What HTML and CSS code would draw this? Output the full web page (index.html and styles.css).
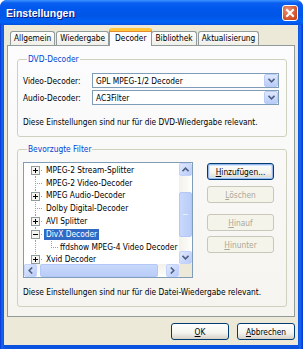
FILE: index.html
```html
<!DOCTYPE html>
<html lang="de">
<head>
    <meta charset="UTF-8">
    <meta name="viewport" content="width=device-width, initial-scale=1.0">
    <title>Einstellungen</title>
    <link rel="stylesheet" href="styles.css">
</head>
<body>
<div class="window">
    <div class="titlebar">
        <span class="title">Einstellungen</span>
        <span class="close-btn">
            <svg width="16" height="16" viewBox="0 0 16 16"><path d="M5 5 L11 11 M11 5 L5 11" stroke="#fff" stroke-width="2" stroke-linecap="square"/></svg>
        </span>
    </div>

    <div class="client">
        <div class="tabs">
            <div class="tab">Allgemein</div>
            <div class="tab">Wiedergabe</div>
            <div class="tab active">Decoder</div>
            <div class="tab">Bibliothek</div>
            <div class="tab">Aktualisierung</div>
        </div>

        <div class="panel">
            <fieldset class="group group-dvd">
                <legend>DVD-Decoder</legend>
                <div class="field">
                    <span class="field-label">Video-Decoder:</span>
                    <div class="combo">
                        <span class="combo-value">GPL MPEG-1/2 Decoder</span>
                        <span class="combo-btn"><svg width="7" height="5" viewBox="0 0 7 5"><path d="M0.5 0.8 L3.5 3.8 L6.5 0.8" fill="none" stroke="#4d6185" stroke-width="1.6"/></svg></span>
                    </div>
                </div>
                <div class="field">
                    <span class="field-label">Audio-Decoder:</span>
                    <div class="combo">
                        <span class="combo-value">AC3Filter</span>
                        <span class="combo-btn"><svg width="7" height="5" viewBox="0 0 7 5"><path d="M0.5 0.8 L3.5 3.8 L6.5 0.8" fill="none" stroke="#4d6185" stroke-width="1.6"/></svg></span>
                    </div>
                </div>
                <p class="note">Diese Einstellungen sind nur für die DVD-Wiedergabe relevant.</p>
            </fieldset>

            <fieldset class="group group-filter">
                <legend>Bevorzugte Filter</legend>
                <div class="filter-row">
                    <div class="tree">
                        <div class="tree-main">
                            <ul class="tree-items">
                                <li class="item first">
                                    <span class="twig"><svg class="expander" width="9" height="9" viewBox="0 0 9 9"><rect x="0.5" y="0.5" width="8" height="8" fill="#f4f4f0" stroke="#919b9c"/><path d="M2 4.5 H7 M4.5 2 V7" stroke="#000"/></svg></span>
                                    <span class="item-label">MPEG-2 Stream-Splitter</span>
                                </li>
                                <li class="item">
                                    <span class="twig"></span>
                                    <span class="item-label">MPEG-2 Video-Decoder</span>
                                </li>
                                <li class="item">
                                    <span class="twig"><svg class="expander" width="9" height="9" viewBox="0 0 9 9"><rect x="0.5" y="0.5" width="8" height="8" fill="#f4f4f0" stroke="#919b9c"/><path d="M2 4.5 H7 M4.5 2 V7" stroke="#000"/></svg></span>
                                    <span class="item-label">MPEG Audio-Decoder</span>
                                </li>
                                <li class="item">
                                    <span class="twig"></span>
                                    <span class="item-label">Dolby Digital-Decoder</span>
                                </li>
                                <li class="item">
                                    <span class="twig"><svg class="expander" width="9" height="9" viewBox="0 0 9 9"><rect x="0.5" y="0.5" width="8" height="8" fill="#f4f4f0" stroke="#919b9c"/><path d="M2 4.5 H7 M4.5 2 V7" stroke="#000"/></svg></span>
                                    <span class="item-label">AVI Splitter</span>
                                </li>
                                <li class="item">
                                    <span class="twig"><svg class="expander" width="9" height="9" viewBox="0 0 9 9"><rect x="0.5" y="0.5" width="8" height="8" fill="#f4f4f0" stroke="#919b9c"/><path d="M2 4.5 H7" stroke="#000"/></svg></span>
                                    <span class="item-label selected">DivX Decoder</span>
                                </li>
                                <li class="item">
                                    <span class="twig"></span>
                                    <span class="twig twig-last"></span>
                                    <span class="item-label">ffdshow MPEG-4 Video Decoder</span>
                                </li>
                                <li class="item">
                                    <span class="twig"><svg class="expander" width="9" height="9" viewBox="0 0 9 9"><rect x="0.5" y="0.5" width="8" height="8" fill="#f4f4f0" stroke="#919b9c"/><path d="M2 4.5 H7 M4.5 2 V7" stroke="#000"/></svg></span>
                                    <span class="item-label">Xvid Decoder</span>
                                </li>
                            </ul>
                            <div class="vscroll">
                                <span class="sb-btn"><svg width="7" height="5" viewBox="0 0 7 5"><path d="M0.5 4.2 L3.5 1.2 L6.5 4.2" fill="none" stroke="#4d6185" stroke-width="1.6"/></svg></span>
                                <span class="sb-track"><span class="sb-thumb"></span></span>
                                <span class="sb-btn"><svg width="7" height="5" viewBox="0 0 7 5"><path d="M0.5 0.8 L3.5 3.8 L6.5 0.8" fill="none" stroke="#4d6185" stroke-width="1.6"/></svg></span>
                            </div>
                        </div>
                        <div class="hscroll-row">
                            <div class="hscroll">
                                <span class="sb-btn"><svg width="5" height="7" viewBox="0 0 5 7"><path d="M4.2 0.5 L1.2 3.5 L4.2 6.5" fill="none" stroke="#4d6185" stroke-width="1.6"/></svg></span>
                                <span class="sb-track"><span class="sb-thumb"></span></span>
                                <span class="sb-btn"><svg width="5" height="7" viewBox="0 0 5 7"><path d="M0.8 0.5 L3.8 3.5 L0.8 6.5" fill="none" stroke="#4d6185" stroke-width="1.6"/></svg></span>
                            </div>
                            <span class="sb-corner"></span>
                        </div>
                    </div>

                    <div class="side-buttons">
                        <button class="btn btn-focus"><u>H</u>inzufügen...</button>
                        <button class="btn btn-del" disabled><u>L</u>öschen</button>
                        <button class="btn btn-up" disabled><u>H</u>inauf</button>
                        <button class="btn btn-down" disabled><u>H</u>inunter</button>
                    </div>
                </div>
                <p class="note">Diese Einstellungen sind nur für die Datei-Wiedergabe relevant.</p>
            </fieldset>
        </div>

        <div class="dialog-buttons">
            <button class="btn"><u>O</u>K</button>
            <button class="btn"><u>A</u>bbrechen</button>
        </div>
    </div>
</div>
</body>
</html>
```

FILE: styles.css
```css
* {
    box-sizing: border-box;
}
body {
    margin: 0;
    background: #fff;
    font-family: "DejaVu Sans", "Liberation Sans", sans-serif;
    font-stretch: condensed;
    font-size: 8.3px;
    color: #000;
}

/* window frame */
.window {
    width: 303px;
    height: 349px;
    display: flex;
    flex-direction: column;
    background: linear-gradient(to right, #0831d9, #166aee 2px, #0a53e0 4px, #0a53e0 298px, #166aee 300px, #0831d9);
    border-radius: 7px 7px 0 0;
    overflow: hidden;
}
.titlebar {
    height: 25px;
    flex: none;
    display: flex;
    align-items: center;
    justify-content: space-between;
    padding: 0 5px 0 6px;
    background: linear-gradient(#3d95ff 0, #0a5ff0 3px, #0058ee 8px, #0055e5 16px, #0062f7 22px, #0050dd 25px);
}
.title {
    font-family: "Liberation Sans", sans-serif;
    font-weight: bold;
    font-size: 10.5px;
    color: #fff;
    text-shadow: 1px 1px #0a1883;
    margin-top: 1px;
}
.close-btn {
    width: 16px;
    height: 16px;
    border: 1px solid #fff;
    border-radius: 3px;
    background: radial-gradient(circle at 35% 30%, #e9957a, #d6582f 60%, #c23d18);
    display: flex;
    align-items: center;
    justify-content: center;
    margin-top: 1px;
}
.close-btn svg {
    margin: -1px;
}

.client {
    flex: 1;
    margin: 0 5px 4px 4px;
    padding: 3px 3px 5px 3px;
    background: #ece9d8;
    display: flex;
    flex-direction: column;
}

/* tabs */
.tabs {
    height: 17px;
    display: flex;
    align-items: flex-end;
    padding-left: 3px;
    position: relative;
    z-index: 1;
}
.tab {
    height: 14px;
    padding: 0 3px;
    margin-right: 1px;
    line-height: 13px;
    border: 1px solid #919b9c;
    border-bottom: none;
    border-radius: 3px 3px 0 0;
    background: linear-gradient(#fefefe, #f0efe8);
}
.tab.active {
    height: 18px;
    margin-bottom: -1px;
    margin-left: -1px;
    margin-right: -1px;
    padding: 0 5px;
    line-height: 15px;
    background: #fcfcfe;
    border-top: 3px solid #ffc83c;
    box-shadow: inset 0 1px #e68b2c;
}

.panel {
    height: 272px;
    flex: none;
    border: 1px solid #919b9c;
    background: linear-gradient(#fcfcfe, #f5f4ef);
    padding: 8px 7px 0 9px;
}

/* group boxes */
.group {
    margin: 0;
    border: 1px solid #d0d0bf;
    border-radius: 3px;
    padding: 8px 7px 8px 5px;
}
.group legend {
    color: #0046d5;
    padding: 0 1px;
    margin-left: 4px;
    line-height: 11px;
}
.group-filter {
    margin-top: 7px;
    padding-top: 7px;
}
.field {
    display: flex;
    align-items: center;
    height: 15px;
}
.field + .field {
    margin-top: 2px;
}
.field-label {
    width: 69px;
}
.combo {
    flex: 1;
    height: 15px;
    border: 1px solid #7f9db9;
    background: #fff;
    display: flex;
    align-items: center;
    padding: 0 0 0 3px;
}
.combo-value {
    flex: 1;
}
.combo-btn {
    width: 14px;
    height: 13px;
    border: 1px solid #bacdf7;
    border-radius: 2px;
    background: linear-gradient(#dfe8fd, #b9ccf8);
    display: flex;
    align-items: center;
    justify-content: center;
}
.note {
    margin: 11px 0 0;
    line-height: 12px;
}
.group-filter .note {
    margin-top: 8px;
}

/* tree + scrollbars */
.filter-row {
    display: flex;
    align-items: flex-start;
}
.tree {
    width: 170px;
    height: 116px;
    border: 1px solid #7f9db9;
    background: #fff;
    display: flex;
    flex-direction: column;
}
.tree-main {
    height: 101px;
    display: flex;
}
.tree-items {
    flex: 1;
    list-style: none;
    margin: 0;
    padding: 1px 0 0 7px;
    overflow: hidden;
    white-space: nowrap;
}
.item {
    height: 12.8px;
    display: flex;
    align-items: center;
}
.twig {
    width: 13px;
    height: 13px;
    flex: none;
    background-image:
        repeating-linear-gradient(to bottom, #a0a0a0 0 1px, transparent 1px 2px),
        repeating-linear-gradient(to right, #a0a0a0 0 1px, transparent 1px 2px);
    background-size: 1px 13px, 8px 1px;
    background-position: 4px 0, 4px 6px;
    background-repeat: no-repeat;
}
.item.first .twig {
    background-size: 1px 7px, 8px 1px;
    background-position: 4px 6px, 4px 6px;
}
.item .twig + .twig {
    width: 11px;
    margin-left: 3px;
}
.item .twig:first-child:not(:last-child):has(+ .twig) {
    background-size: 1px 13px, 0 0;
}
.twig-last {
    background-size: 1px 7px, 7px 1px;
}
.expander {
    display: block;
    margin-top: 2px;
}
.item-label {
    padding: 0 2px;
    line-height: 11px;
}
.item-label.selected {
    background: #316ac5;
    color: #fff;
}

.vscroll {
    width: 13px;
    display: flex;
    flex-direction: column;
    background: linear-gradient(to right, #f3f1ea, #fefefb);
}
.hscroll-row {
    height: 13px;
    display: flex;
}
.hscroll {
    flex: 1;
    display: flex;
    background: linear-gradient(#f3f1ea, #fefefb);
}
.sb-corner {
    width: 13px;
    background: #ece9d8;
}
.sb-btn {
    width: 13px;
    height: 13px;
    flex: none;
    border: 1px solid #c3d3fd;
    border-radius: 2px;
    background: linear-gradient(135deg, #e0e9fe, #b8cbf7);
    display: flex;
    align-items: center;
    justify-content: center;
}
.sb-track {
    flex: 1;
    position: relative;
}
.vscroll .sb-thumb {
    display: block;
    margin-top: 16px;
    height: 45px;
    border: 1px solid #b3c8f6;
    border-radius: 2px;
    background:
        linear-gradient(#e6edfd, #e6edfd) center / 5px 1px no-repeat,
        linear-gradient(to right, #c9d8fc, #b9cdf8);
}
.hscroll .sb-thumb {
    display: block;
    margin-left: 3px;
    width: 118px;
    height: 13px;
    border: 1px solid #b3c8f6;
    border-radius: 2px;
    background: linear-gradient(#c9d8fc, #b9cdf8);
}

/* buttons */
.btn {
    font: inherit;
    color: #000;
    height: 17px;
    padding: 0;
    border: 1px solid #003c74;
    border-radius: 3px;
    background: linear-gradient(#ffffff, #f3f3ef 60%, #d6d0c5);
}
.btn:disabled {
    color: #aca899;
    border-color: #c9c7ba;
    background: #f5f4ea;
}
.btn-focus {
    box-shadow: inset 0 0 0 1px #98b8ea, inset 0 0 0 2px #cee7ff;
}
.side-buttons {
    width: 67px;
    margin-left: 14px;
    margin-top: 1px;
    display: flex;
    flex-direction: column;
}
.btn-del {
    margin-top: 6px;
}
.btn-up {
    margin-top: 11px;
}
.btn-down {
    margin-top: 5px;
}

.dialog-buttons {
    margin-top: 6px;
    display: flex;
    justify-content: flex-end;
    gap: 8px;
}
.dialog-buttons .btn {
    width: 58px;
}
```
